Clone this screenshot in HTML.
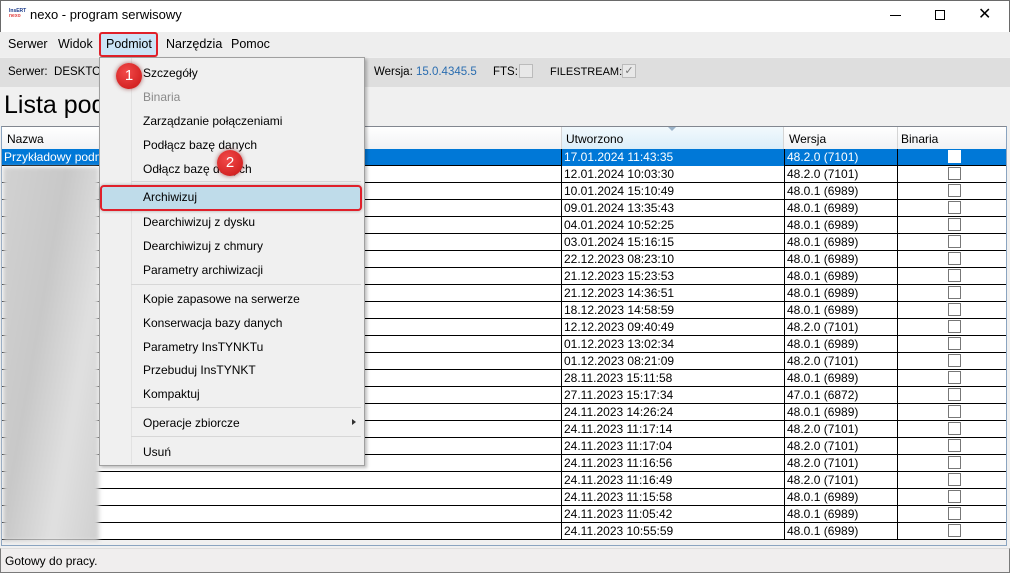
<!DOCTYPE html>
<html><head><meta charset="utf-8"><style>
*{box-sizing:border-box;margin:0;padding:0}
body{width:1010px;height:573px;overflow:hidden;background:#f0f0f0;font-family:"Segoe UI","Liberation Sans",sans-serif;font-size:12px;color:#000;position:relative}
.a{position:absolute;white-space:nowrap}
.row{position:absolute;left:2px;width:1004px;height:17px;border-bottom:1px solid #000;background:#fff}
.c{position:absolute;top:0;height:17px;line-height:17px;padding-left:2px;border-left:1px solid #000}
.cb{position:absolute;left:946px;top:1px;width:13px;height:13px;border:1px solid #777;background:#fff}
.mi{position:absolute;left:143px;font-size:12px;color:#000}
.sep{position:absolute;left:131px;width:230px;height:1px;background:#d7d7d7}
.badge{position:absolute;width:26px;height:26px;border-radius:50%;background:radial-gradient(circle at 40% 35%,#f24a4a,#c81414);color:#fff;font-size:15px;text-align:center;line-height:26px;box-shadow:0 0 5px rgba(120,0,0,.6)}
</style></head><body>
<div class="a" style="left:0;top:0;width:1010px;height:32px;background:#fff;border:1px solid #6a6a6a;border-bottom:none"></div>
<div class="a" style="left:9px;top:9px;font-size:5px;line-height:5px;color:#1b3a8a;font-weight:bold">InsERT<br><span style="color:#e04040">nexo</span></div>
<div class="a" style="left:30px;top:7px;font-size:13px">nexo - program serwisowy</div>
<div class="a" style="left:890px;top:15px;width:11px;height:1px;background:#000"></div>
<div class="a" style="left:935px;top:10px;width:10px;height:10px;border:1px solid #000"></div>
<div class="a" style="left:978px;top:4px;font-size:16px;color:#000">✕</div>
<div class="a" style="left:0;top:32px;width:1010px;height:25px;background:#eeeeee"></div>
<div class="a" style="left:8px;top:37px;font-size:12.5px">Serwer</div>
<div class="a" style="left:58px;top:37px;font-size:12.5px">Widok</div>
<div class="a" style="left:99px;top:32px;width:59px;height:25px;background:#cce4f7;border:2px solid #e0202a;border-radius:3px"></div>
<div class="a" style="left:106px;top:37px;font-size:12.5px">Podmiot</div>
<div class="a" style="left:166px;top:37px;font-size:12.5px">Narzędzia</div>
<div class="a" style="left:231px;top:37px;font-size:12.5px">Pomoc</div>
<div class="a" style="left:0;top:58px;width:1010px;height:29px;background:#dedede"></div>
<div class="a" style="left:8px;top:66px;font-size:11.5px">Serwer:&nbsp; DESKTOP</div>
<div class="a" style="left:374px;top:66px;font-size:11.5px">Wersja: <span style="color:#2a6db0">15.0.4345.5</span></div>
<div class="a" style="left:493px;top:66px;font-size:11.5px">FTS:</div>
<div class="a" style="left:519px;top:64px;width:14px;height:14px;border:1px solid #bbb;background:#e8e8e8"></div>
<div class="a" style="left:550px;top:66px;font-size:11px">FILESTREAM:</div>
<div class="a" style="left:622px;top:64px;width:14px;height:14px;border:1px solid #bbb;background:#e8e8e8;font-size:11px;line-height:12px;text-align:center;color:#777">✓</div>
<div class="a" style="left:4px;top:91px;font-size:25px;font-weight:300">Lista pod</div>
<div class="a" style="left:1px;top:126px;width:1006px;height:420px;border:1px solid #8aa4c0;border-top:1px solid #828790;background:#f0f0f0"></div>
<div class="a" style="left:2px;top:127px;width:1004px;height:22px;background:linear-gradient(#fff,#f1f2f4)"></div>
<div class="a" style="left:561px;top:127px;width:223px;height:22px;background:linear-gradient(#f2f9fd,#dbeef9);border-left:1px solid #d5d5d5;border-right:1px solid #d5d5d5"></div>
<div class="a" style="left:668px;top:127px;width:0;height:0;border-left:4px solid transparent;border-right:4px solid transparent;border-top:4px solid #9bb3c9"></div>
<div class="a" style="left:897px;top:127px;width:1px;height:22px;background:#d5d5d5"></div>
<div class="a" style="left:7px;top:132px">Nazwa</div>
<div class="a" style="left:566px;top:132px">Utworzono</div>
<div class="a" style="left:789px;top:132px">Wersja</div>
<div class="a" style="left:901px;top:132px">Binaria</div>
<div class="row" style="top:149px;background:#0078d7;color:#fff"><div class="c" style="left:0;border:none">Przykładowy podmiot</div><div class="c" style="left:559px;width:223px;background:#0078d7">17.01.2024 11:43:35</div><div class="c" style="left:782px;width:113px">48.2.0 (7101)</div><div class="c" style="left:895px;width:109px"></div><div class="cb" style="border-color:#fff"></div></div>
<div class="row" style="top:166px"><div class="c" style="left:559px">12.01.2024 10:03:30</div><div class="c" style="left:782px">48.2.0 (7101)</div><div class="c" style="left:895px"></div><div class="cb"></div></div>
<div class="row" style="top:183px"><div class="c" style="left:559px">10.01.2024 15:10:49</div><div class="c" style="left:782px">48.0.1 (6989)</div><div class="c" style="left:895px"></div><div class="cb"></div></div>
<div class="row" style="top:200px"><div class="c" style="left:559px">09.01.2024 13:35:43</div><div class="c" style="left:782px">48.0.1 (6989)</div><div class="c" style="left:895px"></div><div class="cb"></div></div>
<div class="row" style="top:217px"><div class="c" style="left:559px">04.01.2024 10:52:25</div><div class="c" style="left:782px">48.0.1 (6989)</div><div class="c" style="left:895px"></div><div class="cb"></div></div>
<div class="row" style="top:234px"><div class="c" style="left:559px">03.01.2024 15:16:15</div><div class="c" style="left:782px">48.0.1 (6989)</div><div class="c" style="left:895px"></div><div class="cb"></div></div>
<div class="row" style="top:251px"><div class="c" style="left:559px">22.12.2023 08:23:10</div><div class="c" style="left:782px">48.0.1 (6989)</div><div class="c" style="left:895px"></div><div class="cb"></div></div>
<div class="row" style="top:268px"><div class="c" style="left:559px">21.12.2023 15:23:53</div><div class="c" style="left:782px">48.0.1 (6989)</div><div class="c" style="left:895px"></div><div class="cb"></div></div>
<div class="row" style="top:285px"><div class="c" style="left:559px">21.12.2023 14:36:51</div><div class="c" style="left:782px">48.0.1 (6989)</div><div class="c" style="left:895px"></div><div class="cb"></div></div>
<div class="row" style="top:302px"><div class="c" style="left:559px">18.12.2023 14:58:59</div><div class="c" style="left:782px">48.0.1 (6989)</div><div class="c" style="left:895px"></div><div class="cb"></div></div>
<div class="row" style="top:319px"><div class="c" style="left:559px">12.12.2023 09:40:49</div><div class="c" style="left:782px">48.2.0 (7101)</div><div class="c" style="left:895px"></div><div class="cb"></div></div>
<div class="row" style="top:336px"><div class="c" style="left:559px">01.12.2023 13:02:34</div><div class="c" style="left:782px">48.0.1 (6989)</div><div class="c" style="left:895px"></div><div class="cb"></div></div>
<div class="row" style="top:353px"><div class="c" style="left:559px">01.12.2023 08:21:09</div><div class="c" style="left:782px">48.2.0 (7101)</div><div class="c" style="left:895px"></div><div class="cb"></div></div>
<div class="row" style="top:370px"><div class="c" style="left:559px">28.11.2023 15:11:58</div><div class="c" style="left:782px">48.0.1 (6989)</div><div class="c" style="left:895px"></div><div class="cb"></div></div>
<div class="row" style="top:387px"><div class="c" style="left:559px">27.11.2023 15:17:34</div><div class="c" style="left:782px">47.0.1 (6872)</div><div class="c" style="left:895px"></div><div class="cb"></div></div>
<div class="row" style="top:404px"><div class="c" style="left:559px">24.11.2023 14:26:24</div><div class="c" style="left:782px">48.0.1 (6989)</div><div class="c" style="left:895px"></div><div class="cb"></div></div>
<div class="row" style="top:421px"><div class="c" style="left:559px">24.11.2023 11:17:14</div><div class="c" style="left:782px">48.2.0 (7101)</div><div class="c" style="left:895px"></div><div class="cb"></div></div>
<div class="row" style="top:438px"><div class="c" style="left:559px">24.11.2023 11:17:04</div><div class="c" style="left:782px">48.2.0 (7101)</div><div class="c" style="left:895px"></div><div class="cb"></div></div>
<div class="row" style="top:455px"><div class="c" style="left:559px">24.11.2023 11:16:56</div><div class="c" style="left:782px">48.2.0 (7101)</div><div class="c" style="left:895px"></div><div class="cb"></div></div>
<div class="row" style="top:472px"><div class="c" style="left:559px">24.11.2023 11:16:49</div><div class="c" style="left:782px">48.2.0 (7101)</div><div class="c" style="left:895px"></div><div class="cb"></div></div>
<div class="row" style="top:489px"><div class="c" style="left:559px">24.11.2023 11:15:58</div><div class="c" style="left:782px">48.0.1 (6989)</div><div class="c" style="left:895px"></div><div class="cb"></div></div>
<div class="row" style="top:506px"><div class="c" style="left:559px">24.11.2023 11:05:42</div><div class="c" style="left:782px">48.0.1 (6989)</div><div class="c" style="left:895px"></div><div class="cb"></div></div>
<div class="row" style="top:523px"><div class="c" style="left:559px">24.11.2023 10:55:59</div><div class="c" style="left:782px">48.0.1 (6989)</div><div class="c" style="left:895px"></div><div class="cb"></div></div>
<div class="a" style="left:3px;top:167px;width:96px;height:374px;background:linear-gradient(100deg,#d2d2d2,#c8c8c8 40%,#e0e0e0 70%,#cfcfcf);filter:blur(2px)"></div>
<div class="a" style="left:0;top:548px;width:1010px;height:25px;background:#f0eeee;border:1px solid #7a7a7a;border-top:1px solid #ddd"></div>
<div class="a" style="left:5px;top:554px">Gotowy do pracy.</div>
<div class="a" style="left:99px;top:57px;width:266px;height:409px;background:#f0f0f0;border:1px solid #a0a0a0;box-shadow:2px 2px 3px rgba(0,0,0,.25)"></div>
<div class="a" style="left:131px;top:58px;width:1px;height:406px;background:#e2e2e2"></div>
<div class="mi" style="top:66px">Szczegóły</div>
<div class="mi" style="top:90px;color:#8a8a8a">Binaria</div>
<div class="mi" style="top:114px">Zarządzanie połączeniami</div>
<div class="mi" style="top:138px">Podłącz bazę danych</div>
<div class="mi" style="top:162px">Odłącz bazę danych</div>
<div class="sep" style="top:181px"></div>
<div class="a" style="left:100px;top:185px;width:262px;height:26px;background:#bfdcea;border:2px solid #e0202a;border-radius:4px;box-shadow:0 0 3px rgba(0,0,0,.3)"></div>
<div class="mi" style="top:190px">Archiwizuj</div>
<div class="mi" style="top:215px">Dearchiwizuj z dysku</div>
<div class="mi" style="top:239px">Dearchiwizuj z chmury</div>
<div class="mi" style="top:263px">Parametry archiwizacji</div>
<div class="sep" style="top:284px"></div>
<div class="mi" style="top:292px">Kopie zapasowe na serwerze</div>
<div class="mi" style="top:316px">Konserwacja bazy danych</div>
<div class="mi" style="top:340px">Parametry InsTYNKTu</div>
<div class="mi" style="top:363px">Przebuduj InsTYNKT</div>
<div class="mi" style="top:387px">Kompaktuj</div>
<div class="sep" style="top:407px"></div>
<div class="mi" style="top:416px">Operacje zbiorcze</div>
<div class="a" style="left:352px;top:419px;width:0;height:0;border-top:3.5px solid transparent;border-bottom:3.5px solid transparent;border-left:4px solid #333"></div>
<div class="sep" style="top:436px"></div>
<div class="mi" style="top:445px">Usuń</div>
<div class="badge" style="left:116px;top:63px">1</div>
<div class="badge" style="left:217px;top:150px">2</div>
</body></html>
